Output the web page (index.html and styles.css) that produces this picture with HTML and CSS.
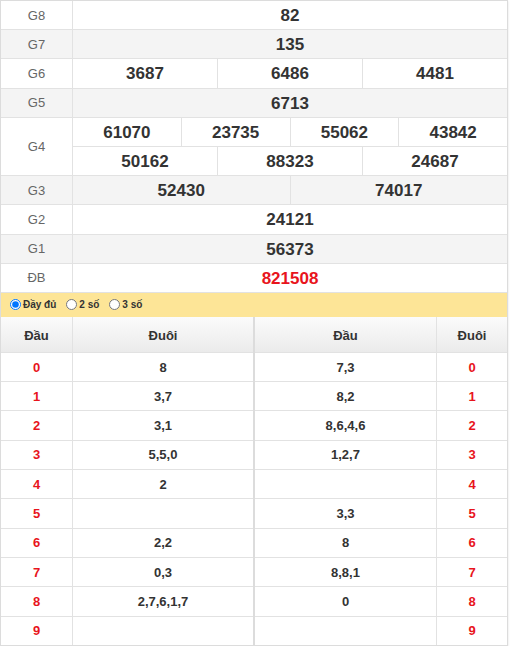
FILE: index.html
```html
<!DOCTYPE html>
<html lang="vi">
<head>
<meta charset="utf-8">
<title>Kết quả</title>
<link rel="stylesheet" href="styles.css">
</head>
<body>
<div class="box">
  <div class="results">
    <div class="row"><div class="label">G8</div><div class="vals"><div class="line"><div class="cell">82</div></div></div></div>
    <div class="row"><div class="label">G7</div><div class="vals"><div class="line"><div class="cell">135</div></div></div></div>
    <div class="row"><div class="label">G6</div><div class="vals"><div class="line"><div class="cell">3687</div><div class="cell">6486</div><div class="cell">4481</div></div></div></div>
    <div class="row"><div class="label">G5</div><div class="vals"><div class="line"><div class="cell">6713</div></div></div></div>
    <div class="row"><div class="label">G4</div><div class="vals">
      <div class="line"><div class="cell">61070</div><div class="cell">23735</div><div class="cell">55062</div><div class="cell">43842</div></div>
      <div class="line"><div class="cell">50162</div><div class="cell">88323</div><div class="cell">24687</div></div>
    </div></div>
    <div class="row"><div class="label">G3</div><div class="vals"><div class="line"><div class="cell">52430</div><div class="cell">74017</div></div></div></div>
    <div class="row"><div class="label">G2</div><div class="vals"><div class="line"><div class="cell">24121</div></div></div></div>
    <div class="row"><div class="label">G1</div><div class="vals"><div class="line"><div class="cell">56373</div></div></div></div>
    <div class="row"><div class="label">ĐB</div><div class="vals"><div class="line"><div class="cell db">821508</div></div></div></div>
  </div>
  <div class="filter">
    <label class="opt"><input type="radio" name="mode" checked>Đầy đủ</label>
    <label class="opt"><input type="radio" name="mode">2 số</label>
    <label class="opt"><input type="radio" name="mode">3 số</label>
  </div>
  <div class="loto">
    <div class="half left">
      <div class="lrow head"><div class="c narrow">Đầu</div><div class="c wide">Đuôi</div></div>
      <div class="lrow"><div class="c narrow red">0</div><div class="c wide">8</div></div>
      <div class="lrow"><div class="c narrow red">1</div><div class="c wide">3,7</div></div>
      <div class="lrow"><div class="c narrow red">2</div><div class="c wide">3,1</div></div>
      <div class="lrow"><div class="c narrow red">3</div><div class="c wide">5,5,0</div></div>
      <div class="lrow"><div class="c narrow red">4</div><div class="c wide">2</div></div>
      <div class="lrow"><div class="c narrow red">5</div><div class="c wide"></div></div>
      <div class="lrow"><div class="c narrow red">6</div><div class="c wide">2,2</div></div>
      <div class="lrow"><div class="c narrow red">7</div><div class="c wide">0,3</div></div>
      <div class="lrow"><div class="c narrow red">8</div><div class="c wide">2,7,6,1,7</div></div>
      <div class="lrow"><div class="c narrow red">9</div><div class="c wide"></div></div>
    </div>
    <div class="half right">
      <div class="lrow head"><div class="c wide">Đầu</div><div class="c narrow">Đuôi</div></div>
      <div class="lrow"><div class="c wide">7,3</div><div class="c narrow red">0</div></div>
      <div class="lrow"><div class="c wide">8,2</div><div class="c narrow red">1</div></div>
      <div class="lrow"><div class="c wide">8,6,4,6</div><div class="c narrow red">2</div></div>
      <div class="lrow"><div class="c wide">1,2,7</div><div class="c narrow red">3</div></div>
      <div class="lrow"><div class="c wide"></div><div class="c narrow red">4</div></div>
      <div class="lrow"><div class="c wide">3,3</div><div class="c narrow red">5</div></div>
      <div class="lrow"><div class="c wide">8</div><div class="c narrow red">6</div></div>
      <div class="lrow"><div class="c wide">8,8,1</div><div class="c narrow red">7</div></div>
      <div class="lrow"><div class="c wide">0</div><div class="c narrow red">8</div></div>
      <div class="lrow"><div class="c wide"></div><div class="c narrow red">9</div></div>
    </div>
  </div>
</div>
</body>
</html>
```

FILE: styles.css
```css
* { box-sizing: border-box; }
body {
  margin: 0;
  background: #fff;
  font-family: "Liberation Sans", Arial, sans-serif;
  color: #333;
}
.box {
  width: 508px;
  border: 1px solid #dcdcdc;
  box-shadow: 0 1px 2px rgba(0, 0, 0, 0.12);
}
.row {
  display: flex;
  border-bottom: 1px solid #e2e2e2;
}
.row:nth-child(even) { background: #f4f4f4; }
.label {
  width: 72px;
  flex: none;
  border-right: 1px solid #e2e2e2;
  display: flex;
  align-items: center;
  justify-content: center;
  font-size: 13px;
  color: #666;
}
.vals {
  flex: 1;
  display: flex;
  flex-direction: column;
}
.line {
  display: flex;
  height: 28.2px;
}
.line + .line { border-top: 1px solid #e2e2e2; height: 29.2px; }
.cell {
  flex: 1;
  display: flex;
  align-items: center;
  justify-content: center;
  padding-top: 2px;
  font-size: 17px;
  font-weight: bold;
  color: #333;
}
.cell + .cell { border-left: 1px solid #e2e2e2; }
.cell.db { color: #e8141c; }

.filter {
  height: 24px;
  background: #fde597;
  display: flex;
  align-items: center;
  padding-left: 9px;
  font-size: 10px;
  font-weight: bold;
  color: #333;
}
.opt {
  display: flex;
  align-items: center;
  margin-right: 10px;
}
.opt input {
  width: 11px;
  height: 11px;
  margin: 0 2px 0 0;
}

.loto { display: flex; }
.half { display: flex; flex-direction: column; }
.left { width: 253px; flex: none; border-right: 1px solid #dcdcdc; }
.right { flex: 1; border-left: 1px solid #dcdcdc; }
.lrow {
  display: flex;
  height: 29.3px;
  border-bottom: 1px solid #e2e2e2;
}
.lrow:last-child { border-bottom: none; height: 28.3px; }
.lrow.head {
  height: 36px;
  background: linear-gradient(#fbfbfb, #ebebeb);
}
.c {
  display: flex;
  align-items: center;
  justify-content: center;
  font-size: 13px;
  font-weight: bold;
  color: #333;
}
.lrow.head .c { padding-top: 2px; }
.narrow { width: 72px; flex: none; }
.left .narrow { border-right: 1px solid #e2e2e2; }
.right .narrow { width: 71px; border-left: 1px solid #e2e2e2; }
.wide { flex: 1; }
.red { color: #e8141c; }
```
